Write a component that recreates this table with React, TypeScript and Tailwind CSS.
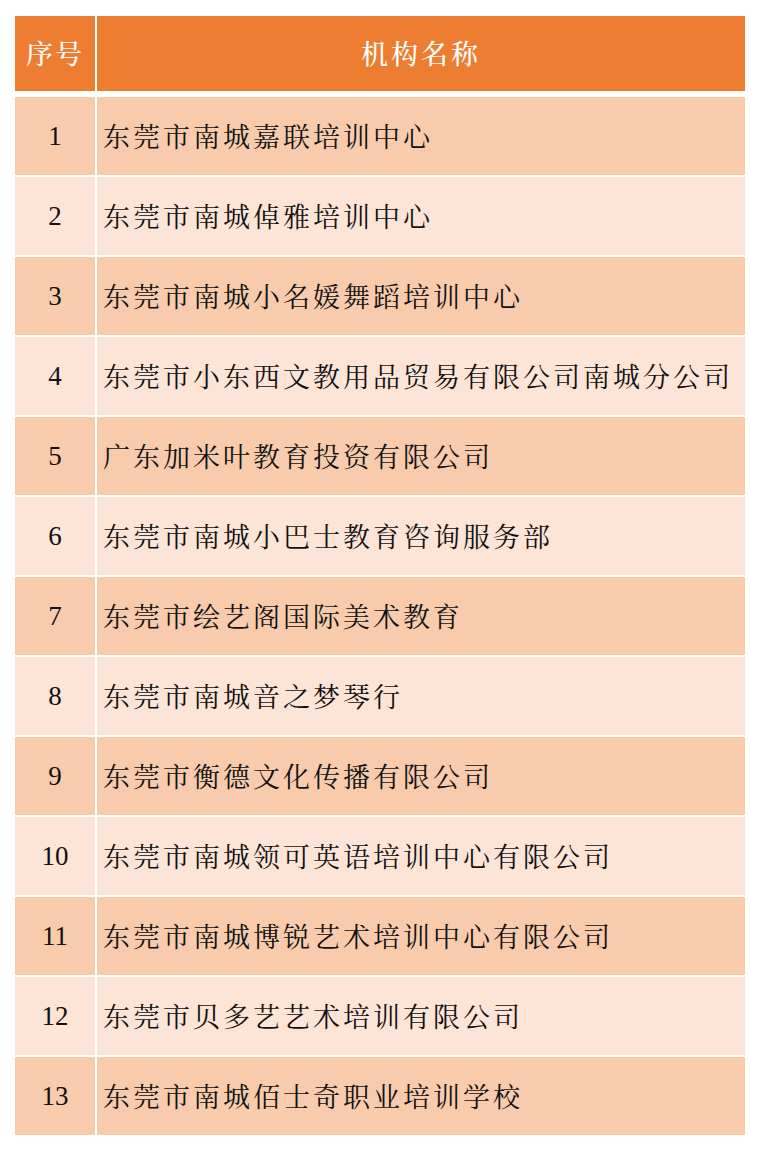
import React from "react";

const names = [
  "东莞市南城嘉联培训中心",
  "东莞市南城倬雅培训中心",
  "东莞市南城小名媛舞蹈培训中心",
  "东莞市小东西文教用品贸易有限公司南城分公司",
  "广东加米叶教育投资有限公司",
  "东莞市南城小巴士教育咨询服务部",
  "东莞市绘艺阁国际美术教育",
  "东莞市南城音之梦琴行",
  "东莞市衡德文化传播有限公司",
  "东莞市南城领可英语培训中心有限公司",
  "东莞市南城博锐艺术培训中心有限公司",
  "东莞市贝多艺艺术培训有限公司",
  "东莞市南城佰士奇职业培训学校",
];

const cjk = {
  fontFamily:
    '"Noto Serif CJK SC", "Noto Sans CJK SC", "Liberation Serif", serif',
};
const num = { fontFamily: '"Liberation Serif", "Noto Sans CJK SC", serif' };

export default function App() {
  return (
    <div className="bg-white w-[760px] h-[1151px] pt-[16px] pl-[15px]">
      <div className="w-[730px] flex flex-col">
        <div className="grid grid-cols-[80px_1fr] gap-x-[2px] h-[75px]">
          <div
            className="bg-[#ED7D31] flex items-center justify-center text-white text-[27px] tracking-[2px] font-medium"
            style={cjk}
          >
            序号
          </div>
          <div
            className="bg-[#ED7D31] flex items-center justify-center text-white text-[27px] tracking-[3px] font-medium"
            style={cjk}
          >
            机构名称
          </div>
        </div>
        <div className="mt-[6px] flex flex-col gap-y-[2px]">
          {names.map((n, i) => {
            const bg = i % 2 === 0 ? "bg-[#F8CBAD]" : "bg-[#FCE4D6]";
            return (
              <div
                key={i}
                className="grid grid-cols-[80px_1fr] gap-x-[2px] h-[78px]"
              >
                <div
                  className={`${bg} flex items-center justify-center text-[27px] text-[#111]`}
                  style={num}
                >
                  {i + 1}
                </div>
                <div
                  className={`${bg} flex items-center pl-[6px] text-[27px] tracking-[3px] text-[#111] whitespace-nowrap`}
                  style={cjk}
                >
                  {n}
                </div>
              </div>
            );
          })}
        </div>
      </div>
    </div>
  );
}
